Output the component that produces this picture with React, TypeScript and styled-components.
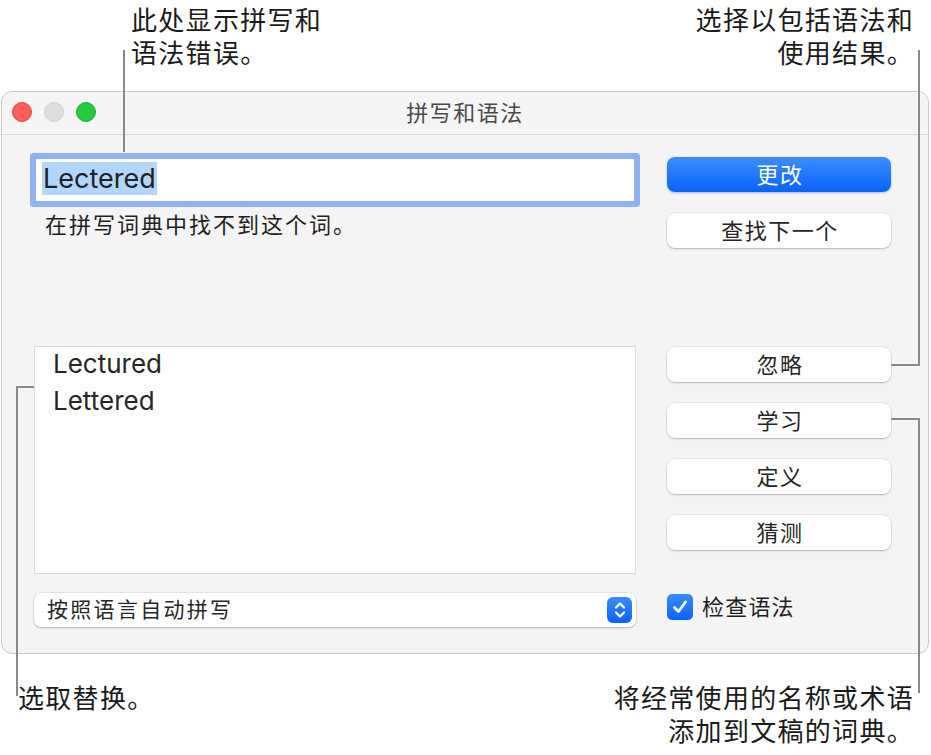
import React from "react";
import styled, { createGlobalStyle } from "styled-components";

const Global = createGlobalStyle`
  html, body { margin: 0; padding: 0; background: #ffffff; }
  body { font-family: "Inter", "Noto Sans CJK SC", sans-serif; color: #1d1d1f; }
`;

const Page = styled.div`
  position: relative;
  width: 931px;
  height: 755px;
  overflow: hidden;
  display: flex;
  flex-direction: column;
`;

const NoteRow = styled.div<{ $h: number; $pt: number }>`
  height: ${(p) => p.$h}px;
  padding-top: ${(p) => p.$pt}px;
  box-sizing: border-box;
  display: flex;
  justify-content: space-between;
  align-items: flex-start;
`;

const Note = styled.div<{ $align: "left" | "right"; $pad: number }>`
  font-family: "Noto Sans CJK SC", sans-serif;
  font-size: 26px;
  line-height: 33px;
  letter-spacing: 1.3px;
  color: #1a1a1a;
  text-align: ${(p) => p.$align};
  ${(p) => (p.$align === "left" ? `padding-left: ${p.$pad}px;` : `padding-right: ${p.$pad}px;`)}
  white-space: nowrap;
`;

const Window = styled.div`
  margin: 0 2px 0 1px;
  height: 563px;
  box-sizing: border-box;
  border: 1px solid #c9c9c9;
  border-radius: 11px;
  background: #f4f4f4;
  display: flex;
  flex-direction: column;
  overflow: hidden;
`;

const TitleBar = styled.div`
  height: 42px;
  flex: none;
  position: relative;
  display: flex;
  align-items: center;
  justify-content: center;
  background: #f5f5f5;
  border-bottom: 1px solid #dadada;
`;

const Lights = styled.div`
  position: absolute;
  left: 10px;
  top: 10px;
  display: flex;
  gap: 12px;
`;

const Light = styled.span<{ $c: string; $b: string }>`
  width: 20px;
  height: 20px;
  border-radius: 50%;
  box-sizing: border-box;
  background: ${(p) => p.$c};
  border: 1px solid ${(p) => p.$b};
`;

const Title = styled.div`
  font-family: "Noto Sans CJK SC", sans-serif;
  font-size: 22px;
  line-height: 26px;
  letter-spacing: 1.5px;
  color: #4a4a4a;
  margin-top: -5px;
`;

const Body = styled.div`
  display: grid;
  grid-template-columns: 602px 224px;
  column-gap: 31px;
  padding-left: 32px;
`;

const LeftCol = styled.div`
  display: flex;
  flex-direction: column;
`;

const RightCol = styled.div`
  display: flex;
  flex-direction: column;
`;

const Field = styled.div`
  margin: 24px 0 0 2px;
  width: 598px;
  height: 42px;
  box-sizing: border-box;
  background: #ffffff;
  box-shadow: 0 0 0 6px #8eb1f2;
  border-radius: 1px;
  display: flex;
  align-items: center;
  padding-left: 6px;
  padding-bottom: 3px;
`;

const Selected = styled.span`
  background: #b3d6fe;
  font-size: 27px;
  line-height: 33px;
  color: #222222;
  padding: 0 1px;
`;

const Message = styled.div`
  margin-top: 10px;
  padding-left: 11px;
  height: 24px;
  font-family: "Noto Sans CJK SC", sans-serif;
  font-size: 22px;
  line-height: 24px;
  letter-spacing: 2px;
  color: #1f1f1f;
`;

const List = styled.div`
  margin-top: 111px;
  height: 228px;
  box-sizing: border-box;
  background: #ffffff;
  border: 1.5px solid #dcdcdc;
  padding: 0 0 0 18px;
  display: flex;
  flex-direction: column;
`;

const ListItem = styled.div`
  font-size: 26px;
  line-height: 37px;
  color: #262626;
  margin-top: -2px;
  & + & {
    margin-top: 0;
  }
`;

const Popup = styled.div`
  margin-top: 19px;
  height: 34px;
  box-sizing: border-box;
  background: #ffffff;
  border-radius: 7px;
  box-shadow: 0 0 0 0.5px rgba(0, 0, 0, 0.12), 0 1px 2px rgba(0, 0, 0, 0.22);
  display: flex;
  align-items: center;
  justify-content: space-between;
  padding: 0 4px 0 13px;
`;

const PopupLabel = styled.span`
  font-family: "Noto Sans CJK SC", sans-serif;
  font-size: 21px;
  line-height: 24px;
  letter-spacing: 2.3px;
  color: #262626;
  margin-top: -4px;
`;

const Stepper = styled.span`
  width: 25px;
  height: 26px;
  border-radius: 6px;
  background: linear-gradient(#3b8cfd, #0a63f9);
  display: flex;
  align-items: center;
  justify-content: center;
`;

const Button = styled.div<{ $primary?: boolean; $mt: number }>`
  margin-top: ${(p) => p.$mt}px;
  height: 35px;
  box-sizing: border-box;
  padding: 0 0 4px 2px;
  border-radius: 8px;
  display: flex;
  align-items: center;
  justify-content: center;
  font-family: "Noto Sans CJK SC", sans-serif;
  font-size: 22px;
  line-height: 26px;
  letter-spacing: 1.5px;
  color: ${(p) => (p.$primary ? "#ffffff" : "#262626")};
  background: ${(p) => (p.$primary ? "linear-gradient(#3c8dfd, #0963fa)" : "#ffffff")};
  box-shadow: ${(p) =>
    p.$primary
      ? "0 1px 2px rgba(0, 60, 200, 0.3)"
      : "0 0 0 0.5px rgba(0, 0, 0, 0.1), 0 1px 2px rgba(0, 0, 0, 0.22)"};
`;

const CheckRow = styled.div`
  margin-top: 44px;
  display: flex;
  align-items: center;
  gap: 9px;
`;

const CheckBox = styled.span`
  width: 26px;
  height: 26px;
  border-radius: 5px;
  background: linear-gradient(#3b8cfd, #0a63f9);
  display: flex;
  align-items: center;
  justify-content: center;
`;

const CheckLabel = styled.span`
  font-family: "Noto Sans CJK SC", sans-serif;
  font-size: 22px;
  line-height: 26px;
  letter-spacing: 1.2px;
  color: #1f1f1f;
  margin-top: -4px;
`;

const Line = styled.div<{ $x: number; $y: number; $w: number; $h: number }>`
  position: absolute;
  left: ${(p) => p.$x}px;
  top: ${(p) => p.$y}px;
  width: ${(p) => p.$w}px;
  height: ${(p) => p.$h}px;
  background: #8a8a8a;
`;

export default function App() {
  return (
    <>
      <Global />
      <Page>
        <NoteRow $h={91} $pt={2}>
          <Note $align="left" $pad={131}>
            此处显示拼写和
            <br />
            语法错误。
          </Note>
          <Note $align="right" $pad={17}>
            选择以包括语法和
            <br />
            使用结果。
          </Note>
        </NoteRow>

        <Window>
          <TitleBar>
            <Lights>
              <Light $c="#fe5f57" $b="#e2463f" />
              <Light $c="#dddddd" $b="#cfcfcf" />
              <Light $c="#28c840" $b="#1eab32" />
            </Lights>
            <Title>拼写和语法</Title>
          </TitleBar>
          <Body>
            <LeftCol>
              <Field>
                <Selected>Lectered</Selected>
              </Field>
              <Message>在拼写词典中找不到这个词。</Message>
              <List>
                <ListItem>Lectured</ListItem>
                <ListItem>Lettered</ListItem>
              </List>
              <Popup>
                <PopupLabel>按照语言自动拼写</PopupLabel>
                <Stepper>
                  <svg width="14" height="18" viewBox="0 0 14 18" fill="none">
                    <path d="M3 6.5 L7 2.5 L11 6.5" stroke="#fff" strokeWidth="2.2" strokeLinecap="round" strokeLinejoin="round" />
                    <path d="M3 11.5 L7 15.5 L11 11.5" stroke="#fff" strokeWidth="2.2" strokeLinecap="round" strokeLinejoin="round" />
                  </svg>
                </Stepper>
              </Popup>
            </LeftCol>
            <RightCol>
              <Button $primary $mt={22}>更改</Button>
              <Button $mt={21}>查找下一个</Button>
              <Button $mt={99}>忽略</Button>
              <Button $mt={21}>学习</Button>
              <Button $mt={21}>定义</Button>
              <Button $mt={21}>猜测</Button>
              <CheckRow>
                <CheckBox>
                  <svg width="18" height="18" viewBox="0 0 18 18" fill="none">
                    <path d="M3.5 9.5 L7.5 13.5 L14.5 4" stroke="#fff" strokeWidth="2.8" strokeLinecap="round" strokeLinejoin="round" />
                  </svg>
                </CheckBox>
                <CheckLabel>检查语法</CheckLabel>
              </CheckRow>
            </RightCol>
          </Body>
        </Window>

        <NoteRow $h={101} $pt={26}>
          <Note $align="left" $pad={18}>
            选取替换。
          </Note>
          <Note $align="right" $pad={17}>
            将经常使用的名称或术语
            <br />
            添加到文稿的词典。
          </Note>
        </NoteRow>

        <Line $x={123} $y={50} $w={2} $h={102} />
        <Line $x={918} $y={50} $w={2} $h={316} />
        <Line $x={891} $y={364} $w={29} $h={2} />
        <Line $x={891} $y={418} $w={29} $h={2} />
        <Line $x={918} $y={418} $w={2} $h={275} />
        <Line $x={16} $y={386} $w={2} $h={310} />
        <Line $x={16} $y={386} $w={18} $h={2} />
      </Page>
    </>
  );
}
